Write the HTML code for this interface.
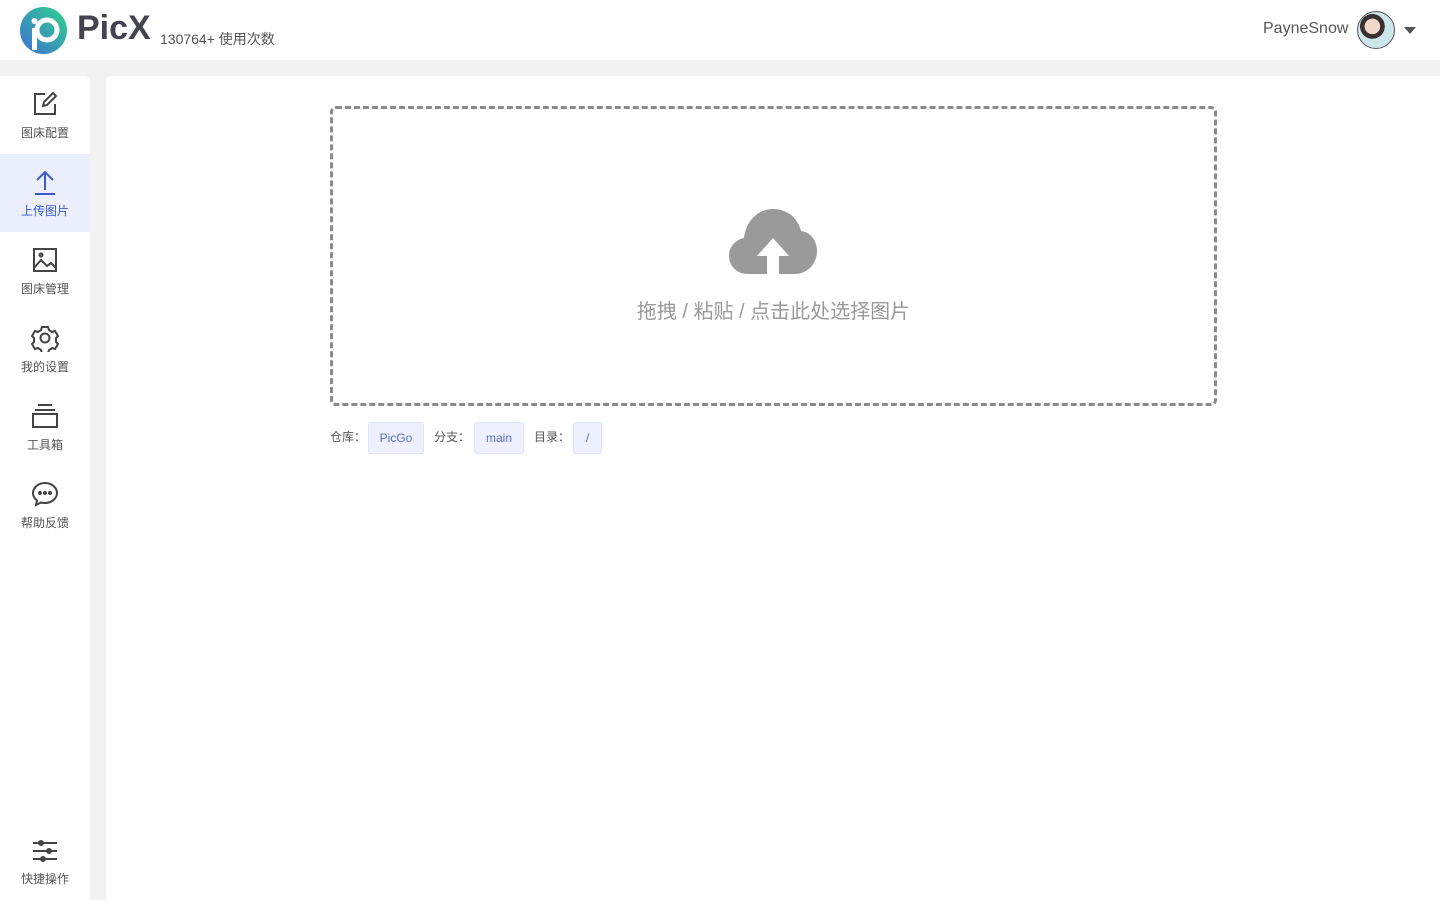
<!DOCTYPE html>
<html><head><meta charset="utf-8"><style>
*{margin:0;padding:0;box-sizing:border-box}
body{width:1440px;height:900px;background:#f2f2f2;font-family:"Liberation Sans","Noto Sans CJK SC",sans-serif;position:relative;overflow:hidden;color:#333}
.hdr{position:absolute;left:0;top:0;width:1440px;height:60px;background:#fff}
.side{position:absolute;left:0;top:76px;width:90px;height:824px;background:#fff;border-top-right-radius:6px}
.main{position:absolute;left:106px;top:76px;width:1334px;height:824px;background:#fff;border-top-left-radius:6px}
.it{position:absolute;left:0;width:90px;height:78px;text-align:center;font-size:12px;color:#555}
.it svg{position:absolute;left:31px;top:14px}
.it span{position:absolute;left:0;right:0;top:48px}
.act{background:#eceffd;color:#3b5bcc}
.box{position:absolute;left:330px;top:106px;width:887px;height:300px;border:3px dashed #8a8a8e;border-radius:6px}
.tip{position:absolute;left:0;right:0;top:186px;text-align:center;font-size:20px;color:#9a9a9a}
.lab{position:absolute;top:428px;font-size:12px;color:#555}
.tag{position:absolute;top:422px;height:32px;line-height:31px;font-size:12px;color:#5a6fc8;background:#eef0fd;border:1px solid #dfe3fb;border-radius:3px;text-align:center}
</style></head><body>
<div class="hdr">
<svg style="position:absolute;left:20px;top:7px" width="47" height="47" viewBox="0 0 47 47"><defs><linearGradient id="g" x1="0" y1="1" x2="1" y2="0"><stop offset="0" stop-color="#3f6fd8"/><stop offset="1" stop-color="#2fd38a"/></linearGradient></defs><circle cx="23.5" cy="23.5" r="23.5" fill="url(#g)"/><circle cx="27" cy="23" r="10" fill="none" stroke="#fff" stroke-width="5"/><rect x="12" y="21" width="5" height="22" fill="#fff"/><circle cx="14.5" cy="14" r="3" fill="#fff"/></svg>
<div style="position:absolute;left:77px;top:9px;font-size:34px;font-weight:bold;color:#444451">PicX</div>
<div style="position:absolute;left:160px;top:29px;font-size:14px;color:#555">130764+ 使用次数</div>
<div style="position:absolute;left:1263px;top:20px;font-size:16px;color:#555">PayneSnow</div>
<div style="position:absolute;left:1357px;top:11px;width:38px;height:38px;border-radius:50%;border:1px solid #555;background:radial-gradient(circle at 40% 40%,#f2d8c8 0 25%,#3a3030 26% 40%,#cde6ec 41%)"></div>
<div style="position:absolute;left:1404px;top:27px;border-left:6px solid transparent;border-right:6px solid transparent;border-top:7px solid #555"></div>
</div>
<div class="side"></div>
<div class="main"></div>
<div class="it" style="top:76px"><svg width="28" height="28" viewBox="0 0 28 28" fill="none" stroke="#444" stroke-width="2"><path d="M14 4H4v20h20V14"/><path d="M12 16l1-4L22 3l3 3-9 9z"/></svg><span>图床配置</span></div>
<div class="it act" style="top:154px"><svg width="28" height="28" viewBox="0 0 28 28" fill="none" stroke="#3b5bcc" stroke-width="2"><path d="M14 22V5M6 12l8-8 8 8M4 26h20"/></svg><span>上传图片</span></div>
<div class="it" style="top:232px"><svg width="28" height="28" viewBox="0 0 28 28" fill="none" stroke="#444" stroke-width="2"><rect x="3" y="3" width="22" height="22"/><path d="M3 22l7-8 6 6 4-3 5 5"/><circle cx="10" cy="9" r="1.5"/></svg><span>图床管理</span></div>
<div class="it" style="top:310px"><svg width="28" height="28" viewBox="0 0 28 28" fill="none" stroke="#444" stroke-width="2"><path d="M11 3h6l1 3 3 2 3-1 3 5-2 2v4l2 2-3 5-3-1-3 2-1 3h-6l-1-3-3-2-3 1-3-5 2-2v-4l-2-2 3-5 3 1 3-2z"/><circle cx="14" cy="14" r="4.5"/></svg><span>我的设置</span></div>
<div class="it" style="top:388px"><svg width="28" height="28" viewBox="0 0 28 28" fill="none" stroke="#444" stroke-width="2"><path d="M7 3h14M4 8h20"/><rect x="2" y="12" width="24" height="13"/></svg><span>工具箱</span></div>
<div class="it" style="top:466px"><svg width="28" height="28" viewBox="0 0 28 28" fill="none" stroke="#444" stroke-width="2"><path d="M14 3C7.5 3 2 7.5 2 13c0 3 1.5 5.5 4 7.5L5 25l5-2.5c1.3.4 2.6.5 4 .5 6.5 0 12-4.5 12-10S20.5 3 14 3z"/><circle cx="9" cy="13" r="1" fill="#444"/><circle cx="14" cy="13" r="1" fill="#444"/><circle cx="19" cy="13" r="1" fill="#444"/></svg><span>帮助反馈</span></div>
<div class="it" style="top:822px"><svg width="28" height="28" viewBox="0 0 28 28" fill="none" stroke="#444" stroke-width="2"><path d="M2 7h24M2 15h24M2 23h24"/><circle cx="10" cy="7" r="2" fill="#444"/><circle cx="18" cy="15" r="2" fill="#444"/><circle cx="12" cy="23" r="2" fill="#444"/></svg><span>快捷操作</span></div>
<div class="box">
<svg style="position:absolute;left:395px;top:97px" width="90" height="70" viewBox="0 0 90 70"><path d="M20 68C9 68 1 60 1 50c0-9 6-16 15-18C18 15 30 3 45 3c14 0 25 9 28 22 9 1 16 9 16 20 0 12-9 23-22 23z" fill="#9a9a9a"/><path d="M45 32L29 50h10v18h12V50h10z" fill="#fff"/></svg>
<div class="tip">拖拽 / 粘贴 / 点击此处选择图片</div>
</div>
<div class="lab" style="left:330px">仓库：</div>
<div class="tag" style="left:368px;width:56px">PicGo</div>
<div class="lab" style="left:434px">分支：</div>
<div class="tag" style="left:474px;width:50px">main</div>
<div class="lab" style="left:534px">目录：</div>
<div class="tag" style="left:573px;width:29px">/</div>
</body></html>
